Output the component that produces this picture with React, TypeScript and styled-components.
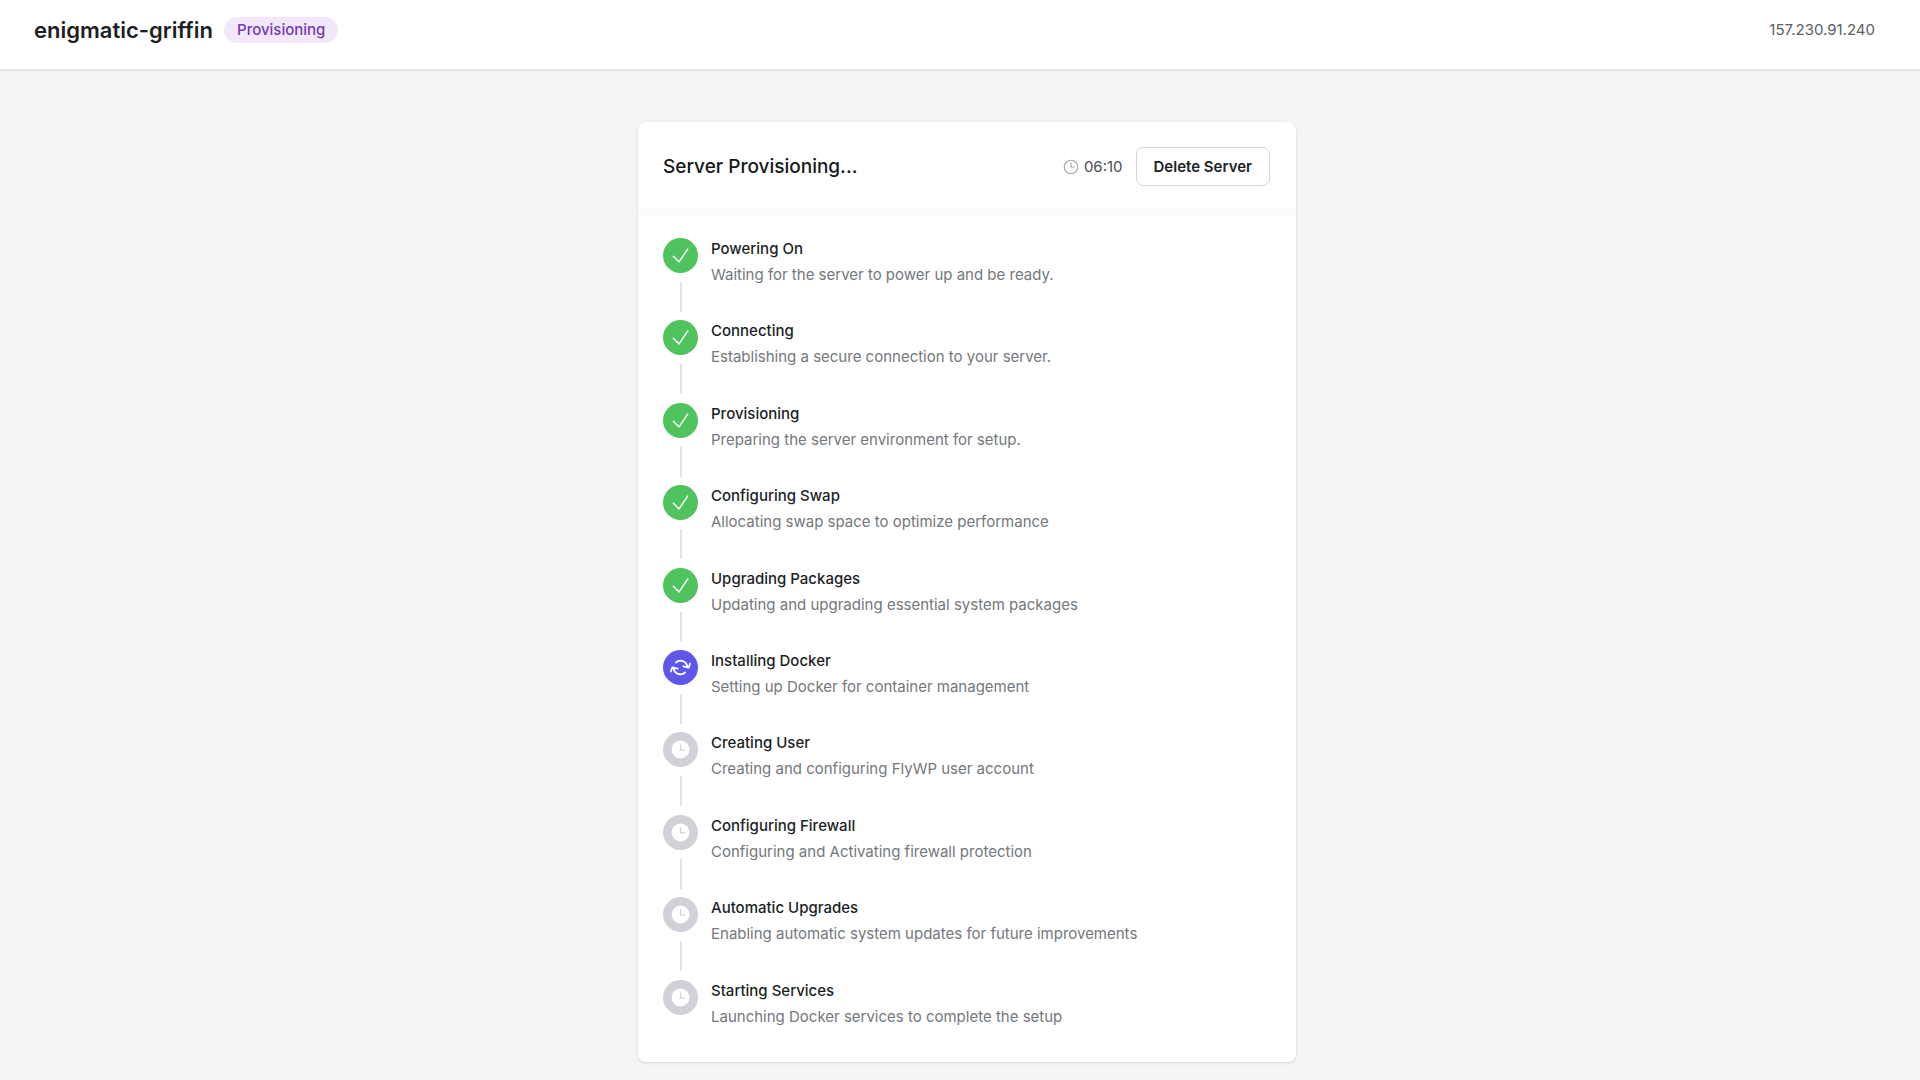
import React from "react";
import styled, { createGlobalStyle } from "styled-components";

const GlobalStyle = createGlobalStyle`
  *, *::before, *::after { box-sizing: border-box; }
  body {
    margin: 0;
    background: #f3f5f7;
    color: #1c1f24;
    font-family: Inter, "Liberation Sans", sans-serif;
    font-size: 15px;
    line-height: 26px;
  }
  h1, h2, h3, p, ol { margin: 0; padding: 0; }
`;

const Page = styled.div`
  min-height: 100vh;
  display: flex;
  flex-direction: column;
`;

const TopBar = styled.header`
  display: flex;
  align-items: center;
  justify-content: space-between;
  padding: 15px 45px 24px 34px;
  background: #fff;
  border-bottom: 2px solid #e3e4e6;
`;

const ServerTitle = styled.div`
  display: flex;
  align-items: center;
  gap: 11px;
`;

const ServerName = styled.h1`
  font-size: 22px;
  font-weight: 600;
  line-height: 30px;
`;

const Badge = styled.span`
  padding: 0 13px;
  border-radius: 13px;
  background: #f3e8fb;
  color: #7239b8;
  font-weight: 500;
`;

const Address = styled.span`
  color: #5b5e63;
`;

const Main = styled.main`
  flex: 1;
  display: flex;
  justify-content: center;
  padding: 51px 24px 18px 38px;
`;

const Card = styled.section`
  display: flex;
  flex-direction: column;
  width: 100%;
  max-width: 658px;
  border-radius: 8px;
  background: #fff;
  box-shadow: 0 1px 3px rgba(0, 0, 0, 0.14);
`;

const CardHeader = styled.div`
  display: flex;
  align-items: center;
  justify-content: space-between;
  padding: 25px 26px 22px 25px;
  border-bottom: 8px solid #fcfcfc;
`;

const CardTitle = styled.h2`
  font-size: 19px;
  font-weight: 500;
  color: #15181c;
`;

const Actions = styled.div`
  display: flex;
  align-items: center;
  gap: 13px;
`;

const Timer = styled.span`
  display: flex;
  align-items: center;
  gap: 4px;
  color: #4a4d52;

  svg { color: #a3a6ab; }
`;

const DeleteButton = styled.button`
  height: 39px;
  padding: 0 17px;
  border: 1px solid #d5d6d9;
  border-radius: 7px;
  background: #fff;
  color: inherit;
  font: inherit;
  font-weight: 600;
  cursor: pointer;
`;

const Steps = styled.ol`
  flex: 1;
  display: grid;
  grid-auto-rows: 1fr;
  padding: 20px 26px 2px 25px;
  list-style: none;
`;

const StepRow = styled.li`
  display: flex;
  gap: 13px;
`;

const Rail = styled.div`
  display: flex;
  flex-direction: column;
  align-items: center;
  gap: 9px;
  padding-top: 2px;
`;

type Status = "done" | "running" | "pending";

const statusColor: Record<Status, string> = {
  done: "#4fc35d",
  running: "#5f57ea",
  pending: "#d0d2d7",
};

const Marker = styled.span<{ $status: Status }>`
  display: flex;
  align-items: center;
  justify-content: center;
  width: 35px;
  height: 35px;
  border-radius: 50%;
  background: ${(p) => statusColor[p.$status]};
  color: #fff;
`;

const Connector = styled.span`
  width: 2px;
  height: 30px;
  background: #e2e3e5;
`;

const StepTitle = styled.h3`
  font-size: 15px;
  font-weight: 500;
`;

const StepText = styled.p`
  color: #74777c;
`;

const CheckIcon = () => (
  <svg width="23" height="23" viewBox="0 0 24 24" fill="none" stroke="currentColor" strokeWidth="1.5" strokeLinecap="round" strokeLinejoin="round" aria-hidden="true">
    <path d="M4.5 12.75l6 6 9-13.5" />
  </svg>
);

const RefreshIcon = () => (
  <svg width="23" height="23" viewBox="-11.5 -11.5 23 23" fill="none" stroke="currentColor" strokeWidth="1.8" strokeLinecap="round" strokeLinejoin="round" aria-hidden="true">
    <path d="M-4.6 -5A6.8 6.8 0 0 1 6.8 -0.8M2.9 -1.2L8.2 0.2L9.6 -4" />
    <path d="M4.6 5A6.8 6.8 0 0 1 -6.8 0.8M-2.9 1.2L-8.2 -0.2L-9.6 4" />
  </svg>
);

const PendingIcon = () => (
  <svg width="19" height="19" viewBox="0 0 20 20" fill="none" aria-hidden="true">
    <circle cx="10" cy="10" r="9.4" fill="currentColor" />
    <path d="M10 4.5V10.5h5" stroke="#d0d2d7" strokeWidth="1.3" />
  </svg>
);

const ClockIcon = () => (
  <svg width="18" height="18" viewBox="0 0 24 24" fill="none" stroke="currentColor" strokeWidth="1.5" strokeLinecap="round" strokeLinejoin="round" aria-hidden="true">
    <path d="M12 6v6h4.5m4.5 0a9 9 0 1 1-18 0 9 9 0 0 1 18 0Z" />
  </svg>
);

const icons: Record<Status, React.FC> = {
  done: CheckIcon,
  running: RefreshIcon,
  pending: PendingIcon,
};

const steps: { title: string; text: string; status: Status }[] = [
  { title: "Powering On", text: "Waiting for the server to power up and be ready.", status: "done" },
  { title: "Connecting", text: "Establishing a secure connection to your server.", status: "done" },
  { title: "Provisioning", text: "Preparing the server environment for setup.", status: "done" },
  { title: "Configuring Swap", text: "Allocating swap space to optimize performance", status: "done" },
  { title: "Upgrading Packages", text: "Updating and upgrading essential system packages", status: "done" },
  { title: "Installing Docker", text: "Setting up Docker for container management", status: "running" },
  { title: "Creating User", text: "Creating and configuring FlyWP user account", status: "pending" },
  { title: "Configuring Firewall", text: "Configuring and Activating firewall protection", status: "pending" },
  { title: "Automatic Upgrades", text: "Enabling automatic system updates for future improvements", status: "pending" },
  { title: "Starting Services", text: "Launching Docker services to complete the setup", status: "pending" },
];

export default function App() {
  return (
    <Page>
      <GlobalStyle />
      <TopBar>
        <ServerTitle>
          <ServerName>enigmatic-griffin</ServerName>
          <Badge>Provisioning</Badge>
        </ServerTitle>
        <Address>157.230.91.240</Address>
      </TopBar>
      <Main>
        <Card>
          <CardHeader>
            <CardTitle>Server Provisioning...</CardTitle>
            <Actions>
              <Timer>
                <ClockIcon />
                06:10
              </Timer>
              <DeleteButton type="button">Delete Server</DeleteButton>
            </Actions>
          </CardHeader>
          <Steps>
            {steps.map((step, i) => {
              const Icon = icons[step.status];
              return (
                <StepRow key={step.title}>
                  <Rail>
                    <Marker $status={step.status}>
                      <Icon />
                    </Marker>
                    {i < steps.length - 1 && <Connector />}
                  </Rail>
                  <div>
                    <StepTitle>{step.title}</StepTitle>
                    <StepText>{step.text}</StepText>
                  </div>
                </StepRow>
              );
            })}
          </Steps>
        </Card>
      </Main>
    </Page>
  );
}
